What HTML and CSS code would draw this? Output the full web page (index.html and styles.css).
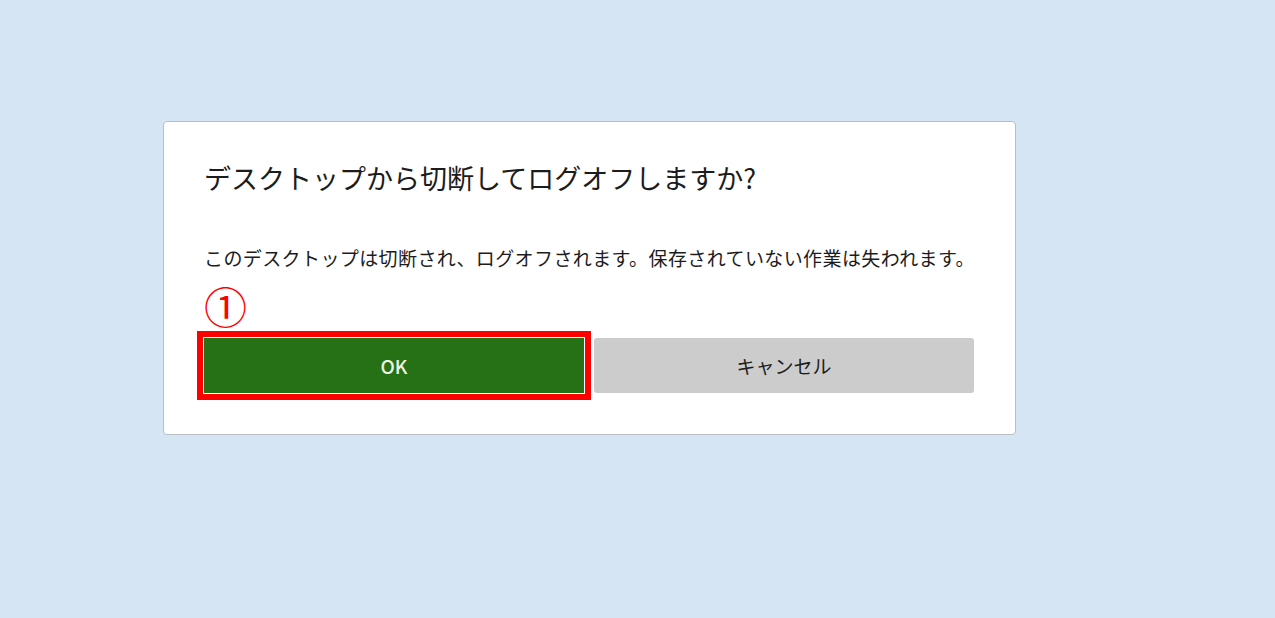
FILE: index.html
```html
<!DOCTYPE html>
<html lang="ja">
<head>
<meta charset="UTF-8">
<title>ログオフ</title>
<link rel="stylesheet" href="styles.css">
</head>
<body>
<div class="dialog">
  <h1 class="title">デスクトップから切断してログオフしますか?</h1>
  <p class="message">このデスクトップは切断され、ログオフされます。保存されていない作業は失われます。</p>
  <div class="mark">①</div>
  <div class="buttons">
    <button class="btn ok">OK</button>
    <button class="btn cancel">キャンセル</button>
  </div>
</div>
</body>
</html>
```

FILE: styles.css
```css
body {margin:0; background:#d5e5f3; font-family:"Noto Sans CJK JP", "Noto Sans", sans-serif;}
.dialog {box-sizing:border-box; width:853px; height:314px; margin:121px 0 0 163px; padding:38px 41px 0 40px; background:#fff; border:1px solid #b9bec5; border-radius:4px; display:flex; flex-direction:column;}
.title {margin:0; font-size:27px; line-height:36px; font-weight:normal; color:#1c1c1c;}
.message {margin:50px 0 0; font-size:19px; line-height:24px; color:#1c1c1c; letter-spacing:0.4px; white-space:nowrap;}
.mark {margin-top:14px; height:42px; font-size:43px; line-height:42px; font-weight:normal; color:#f00;}
.buttons {margin-top:12px; display:flex; gap:10px;}
.btn {flex:1; height:55px; border:0; border-radius:3px; font-family:inherit; font-size:19px;}
.ok {background:#267015; color:#eef3e2; font-weight:500; outline:6px solid #f00; outline-offset:1px; border-radius:0;}
.cancel {background:#cccccc; color:#1c1c1c;}
```
